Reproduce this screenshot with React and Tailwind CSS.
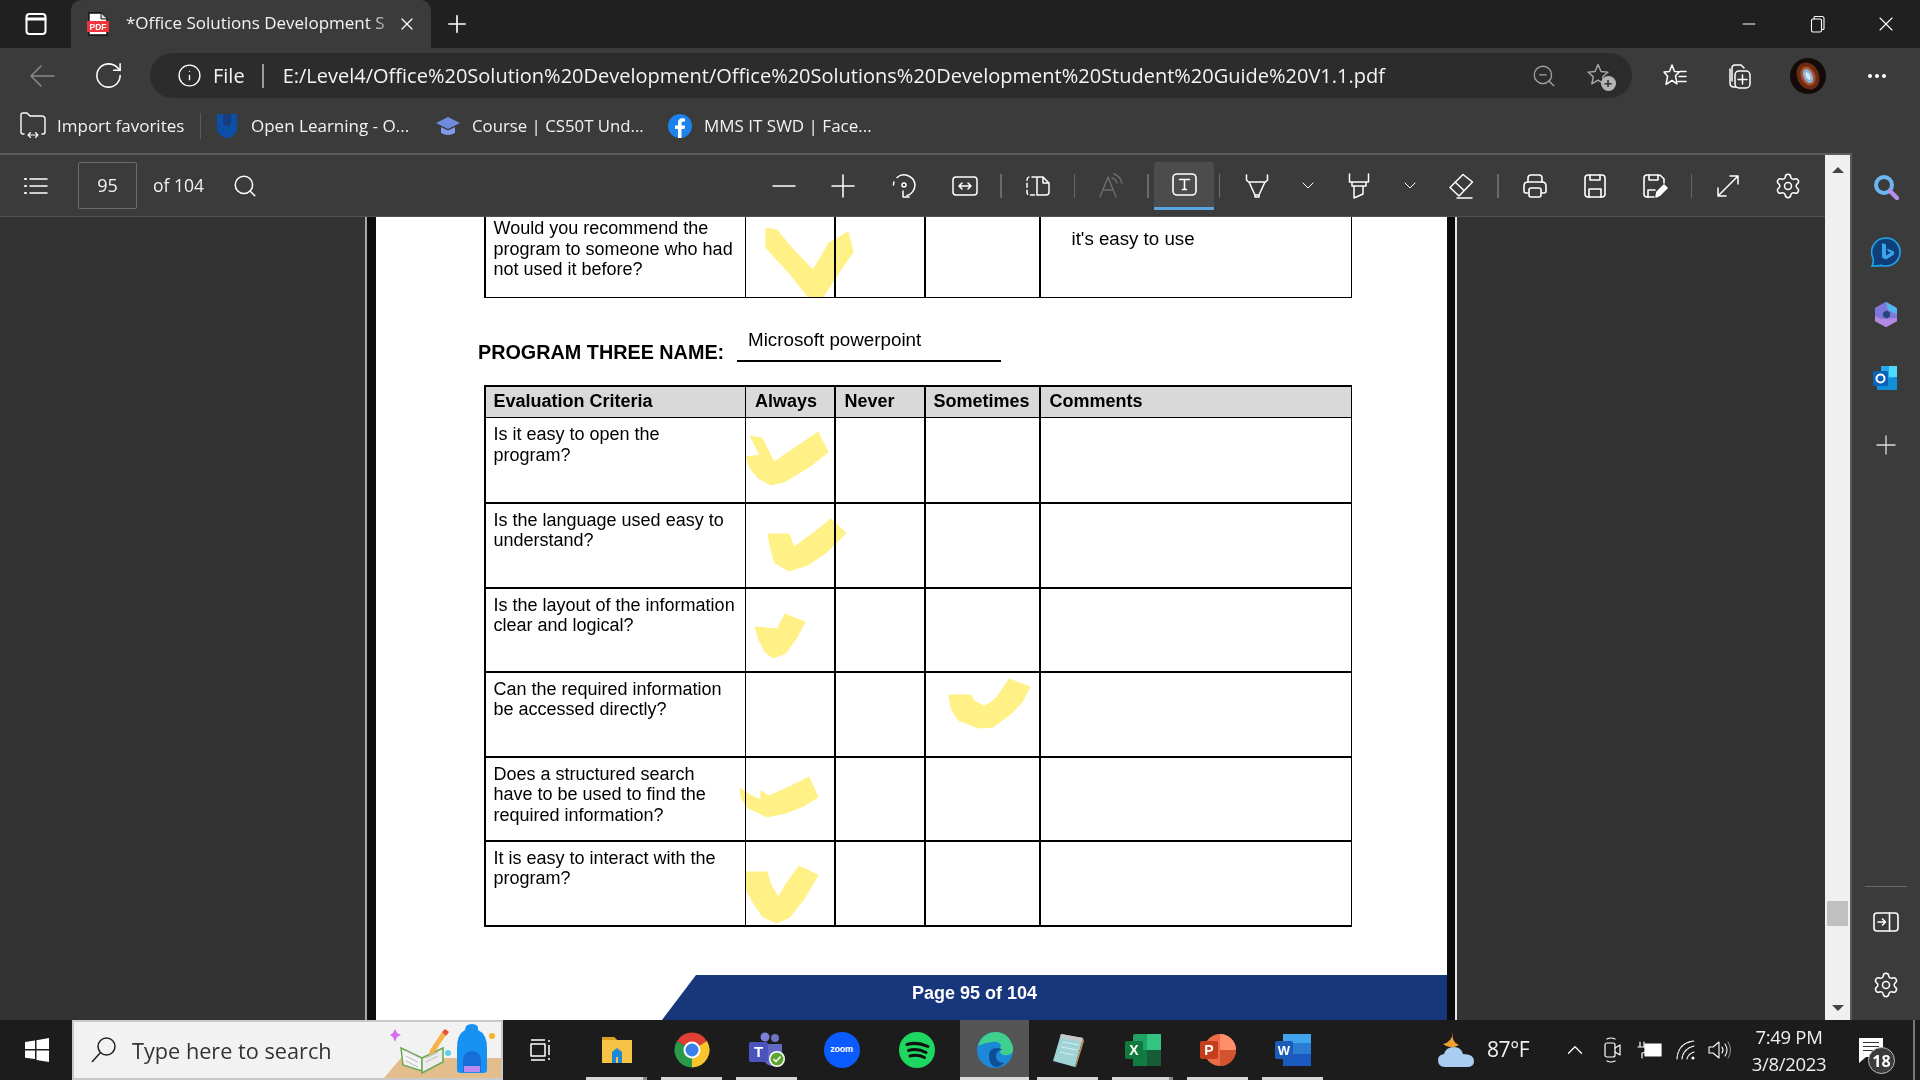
import React from "react";
import { Search, Info, ZoomOut, Settings, Plus, Minus, X, ChevronUp, RotateCw } from "lucide-react";

const S = ({ w = 28, h = 28, vb, children, className = "", sw = 1.6, stroke = "#fff" }) => (
  <svg width={w} height={h} viewBox={vb || `0 0 ${w} ${h}`} fill="none" stroke={stroke} strokeWidth={sw} strokeLinecap="round" strokeLinejoin="round" className={`shrink-0 ${className}`}>
    {children}
  </svg>
);

const Sep = () => <div className="w-[2px] h-[24px] bg-[#6a6a6a]" />;

const Slot = ({ className = "", children }) => (
  <div className={`flex items-center justify-center shrink-0 h-full ${className}`}>{children}</div>
);

const Pdf = () => (
  <svg width="24" height="24" viewBox="0 0 24 24" className="shrink-0">
    <path d="M3 1h12l6 6v16H3z" fill="#fff" stroke="#111" strokeWidth="1.4" />
    <path d="M15 1v6h6" fill="#ddd" stroke="#111" strokeWidth="1" />
    <rect x="1" y="9" width="22" height="11" fill="#f1353b" />
    <text x="12" y="18" textAnchor="middle" fontSize="8.5" fontWeight="700" fill="#fff" fontFamily="Liberation Sans, sans-serif">PDF</text>
  </svg>
);

const TabStrip = () => (
  <div className="h-[48px] bg-[#202020] flex items-end shrink-0">
    <Slot className="w-[71px]">
      <S w={24} h={24}><rect x="2.5" y="2" width="19" height="20" rx="3" strokeWidth="2" /><path d="M3 7h18" strokeWidth="3" /></S>
    </Slot>
    <div className="w-[360px] h-[48px] bg-[#3b3b3b] rounded-t-[10px] flex items-center pl-[15px] text-[#f2f2f2] text-[17px]">
      <Pdf />
      <span className="ml-[16px] mb-[2px] w-[262px] whitespace-nowrap [mask-image:linear-gradient(90deg,#000_93%,#0006_100%)]">*Office Solutions Development S</span>
      <X size={20} strokeWidth={1.5} className="ml-[9px] text-white" />
    </div>
    <Slot className="w-[52px] h-[48px]"><Plus size={28} strokeWidth={1.4} className="text-white" /></Slot>
    <div className="flex-1" />
    <Slot className="w-[69px] h-[48px]"><Minus size={20} strokeWidth={1.2} className="text-white" /></Slot>
    <Slot className="w-[69px] h-[48px]">
      <S w={18} h={18} sw={1.1}><rect x="2.5" y="4" width="10" height="13" rx="1.5" /><path d="M5 4V2.500q0-1 1-1h7q2 0 2 2v10q0 1-1 1h-1.500" /></S>
    </Slot>
    <Slot className="w-[68px] h-[48px]"><X size={24} strokeWidth={1.1} className="text-white" /></Slot>
  </div>
);

const AddressBar = () => (
  <div className="h-[52px] bg-[#3b3b3b] flex items-center shrink-0 pt-[3px]">
    <Slot className="w-[84px] pl-0">
      <S w={28} h={28} stroke="#8a8a8a" sw={1.5}><path d="M3 14h23M13 4 3 14l10 10" /></S>
    </Slot>
    <Slot className="w-[48px]">
      <RotateCw size={31} strokeWidth={1.2} className="text-white" />
    </Slot>
    <div className="w-[18px]" />
    <div className="w-[1482px] h-[45px] rounded-full bg-[#2c2c2c] flex items-center text-[#f4f4f4]">
      <Info size={25} strokeWidth={1.3} className="ml-[27px] text-white" />
      <span className="ml-[11px] text-[20px]">File</span>
      <div className="ml-[17px] w-[2px] h-[24px] bg-[#9a9a9a]" />
      <span className="ml-[19px] text-[20px] whitespace-nowrap w-[1120px]">E:/Level4/Office%20Solution%20Development/Office%20Solutions%20Development%20Student%20Guide%20V1.1.pdf</span>
      <ZoomOut size={26} strokeWidth={1.2} className="text-[#a4a4a4] ml-[128px]" />
      <div className="ml-[29px] relative w-[28px] h-[28px]">
        <S w={28} h={28} stroke="#aaa" sw={1.4}><path d="M12 2.500l3 7 7 .6-5.300 4.700 1.500 7-6.200-3.600-6.200 3.600 1.500-7L2 10.100l7-.6z" /></S>
        <div className="absolute right-[-2px] bottom-[-1px] w-[15px] h-[15px] rounded-full bg-[#b5b5b5] text-[#333] text-[15px] leading-[14px] text-center font-bold">+</div>
      </div>
    </div>
    <Slot className="w-[84px] pl-[1px]">
      <S w={28} h={28} sw={1.5}><path d="M11 3l2.500 6.500 5 .3-4 4 1.500 8-5-3.300-6 3.800 1.600-8L3 10l5.500-.5z" /><path d="M19 9.500h6M18 14.500h7M17 19.500h8" /></S>
    </Slot>
    <Slot className="w-[48px] ml-[-1px]">
      <S w={28} h={30} sw={1.5}><path d="M7 20V7q0-3 3-3h6l3 3" /><path d="M5 8v14q0 4 4 4h2" /><rect x="10" y="10" width="15" height="17" rx="4" /><path d="M17.500 14v9M13 18.500h9" /></S>
    </Slot>
    <Slot className="w-[90px]">
      <svg width="36" height="36" viewBox="0 0 36 36">
        <circle cx="18" cy="18" r="18" fill="#140b08" />
        <ellipse cx="18" cy="18" rx="11" ry="14" fill="#6b2c14" transform="rotate(-25 18 18)" />
        <ellipse cx="18" cy="18" rx="7" ry="10" fill="#a9532c" transform="rotate(-25 18 18)" />
        <ellipse cx="18" cy="18" rx="4.500" ry="7.500" fill="#8cb2e0" transform="rotate(-25 18 18)" />
        <ellipse cx="18" cy="18" rx="2" ry="4" fill="#dbe8f6" transform="rotate(-25 18 18)" />
      </svg>
    </Slot>
    <Slot className="w-[48px]">
      <div className="flex gap-[3px]"><i className="w-[4px] h-[4px] rounded-full bg-white" /><i className="w-[4px] h-[4px] rounded-full bg-white" /><i className="w-[4px] h-[4px] rounded-full bg-white" /></div>
    </Slot>
  </div>
);

const Bookmarks = () => (
  <div className="h-[53px] bg-[#3b3b3b] flex items-center shrink-0 text-[17px] text-[#f2f2f2] whitespace-nowrap pb-[2px]">
    <S w={26} h={28} className="ml-[20px]" sw={1.4}><path d="M4 22H3q-2 0-2-2V3q0-2 2-2h4l3 3h12q2 0 3 2v14q0 2-2 2h-1" /><path d="M8 23h10M8 23l2.500-2.500M8 23l2.500 2.500M18 23l-2.500-2.500M18 23l-2.500 2.500" strokeWidth="1.100" /></S>
    <span className="ml-[11px] w-[128px]">Import favorites</span>
    <div className="ml-[15px] w-px h-[26px] bg-[#5a5a5a]" />
    <svg width="22" height="26" viewBox="0 0 22 26" className="ml-[15px]">
      <path d="M1 1h20v15q0 6-10 9.500Q1 22 1 16z" fill="#0d4ea6" />
      <path d="M7 1h8v8q0 4-4 4t-4-4z" fill="#1a3d7a" />
    </svg>
    <span className="ml-[13px] w-[162px]">Open Learning - O...</span>
    <svg width="26" height="24" viewBox="0 0 26 24" className="ml-[22px]">
      <path d="M13 3 25 9l-12 6L1 9z" fill="#6e8be0" />
      <path d="M6 13v6q7 4 14 0v-6l-7 3.500z" fill="#7f9ae8" />
    </svg>
    <span className="ml-[11px] w-[172px] text-[16.800px]">Course | CS50T Und...</span>
    <svg width="24" height="24" viewBox="0 0 24 24" className="ml-[24px]">
      <circle cx="12" cy="12" r="12" fill="#1a83ee" />
      <path d="M13.500 24v-9h3l.6-3.500h-3.600V9.300q0-1.800 1.900-1.800H17V4.400q-1.200-.2-2.500-.2-4.500 0-4.500 4.600v2.700H7V15h3v9z" fill="#fff" />
    </svg>
    <span className="ml-[12px]">MMS IT SWD | Face...</span>
  </div>
);

const ToolBar = () => (
  <div className="h-[62px] bg-[#3b3b3b] border-b border-[#515151] flex items-center shrink-0 text-[#f2f2f2]">
    <Slot className="w-[72px]">
      <S w={26} h={22} sw={1.5}><path d="M7 4h17M7 11h17M7 18h17" /><path d="M2 4h1M2 11h1M2 18h1" strokeWidth="2" /></S>
    </Slot>
    <div className="ml-[6px] w-[59px] h-[47px] border border-[#6c6c6c] rounded-[2px] flex items-center justify-center text-[18px]">95</div>
    <span className="ml-[16px] w-[76px] text-[17.500px]">of 104</span>
    <Slot className="w-[32px]"><Search size={26} strokeWidth={1.4} className="text-white" /></Slot>
    <div className="w-[493px]" />
    <Slot className="w-[60px]"><S w={24} h={24} sw={1.5}><path d="M1 12h22" /></S></Slot>
    <Slot className="w-[58px]"><S w={24} h={24} sw={1.5}><path d="M1 12h22M12 1v22" /></S></Slot>
    <Slot className="w-[64px]"><S w={26} h={28} sw={1.5}><path d="M6 5.500A11 11 0 0 1 24 13a11 11 0 0 1-8 10.500" /><circle cx="13" cy="13" r="2" /><path d="M12 19v6h6" /><path d="M2.500 13q0-1.500.5-3" /></S></Slot>
    <Slot className="w-[58px]"><S w={28} h={22} sw={1.5}><rect x="2" y="2" width="24" height="18" rx="3" /><path d="M8 11h12M8 11l3-3M8 11l3 3M20 11l-3-3M20 11l-3 3" /></S></Slot>
    <Slot className="w-[14px]"><Sep /></Slot>
    <Slot className="w-[60px]"><S w={26} h={22} sw={1.5}><path d="M11 2H5q-3 0-3 3v12q0 3 3 3h6" strokeDasharray="4 3" /><path d="M12 2h6l6 6v9q0 3-3 3h-9zM18 2v6h6" /></S></Slot>
    <Slot className="w-[12px]"><div className="w-px h-[24px] bg-[#666]" /></Slot>
    <Slot className="w-[62px]">
      <S w={26} h={26} stroke="#6e6e6e" sw={1.4}><path d="M2 24 10 4l8 20M5 17h10" /><path d="M14 5q4 1 5 5M16 1q6 2 8 9" /></S>
    </Slot>
    <Slot className="w-[12px]"><Sep /></Slot>
    <div className="w-[60px] h-[48px] bg-[#4c4c4c] rounded-t-[3px] border-b-[3px] border-[#55a5e0] flex items-center justify-center">
      <S w={25} h={23} sw={1.6}><rect x="1" y="1" width="23" height="21" rx="4" /><path d="M7.500 6.500h10M12.500 6.500v10M10.500 16.500h4" /></S>
    </div>
    <Slot className="w-[11px]"><div className="w-px h-[24px] bg-[#707070]" /></Slot>
    <Slot className="w-[64px]"><S w={24} h={26} sw={1.5}><path d="M1.500 2v5l2 2h17l2-2V2M4 9l6 13h4l6-13M10 22v2h4v-2" /></S></Slot>
    <Slot className="w-[38px]"><S w={14} h={10} sw={1}><path d="M2 2l5 5 5-5" /></S></Slot>
    <Slot className="w-[64px]"><S w={24} h={26} sw={1.5}><path d="M2.500 1v8h19V1M5 9v4h14V9M7 13v12l9-4v-8" /></S></Slot>
    <Slot className="w-[38px]"><S w={14} h={10} sw={1}><path d="M2 2l5 5 5-5" /></S></Slot>
    <Slot className="w-[64px]"><S w={26} h={26} sw={1.5}><path d="M15 1.500 24.500 9 11 23l-9-8.500zM7 9l9 8.500M9 25h15" /></S></Slot>
    <Slot className="w-[10px]"><Sep /></Slot>
    <Slot className="w-[64px]"><S w={26} h={26} sw={1.6}><path d="M6 9V5q0-3 3-3h8q3 0 3 3v4" /><path d="M6 20H4q-2 0-2-2v-5q0-4 4-4h14q4 0 4 4v5q0 2-2 2h-2" /><rect x="7" y="15" width="12" height="9" rx="2" /></S></Slot>
    <Slot className="w-[56px]"><S w={24} h={26} sw={1.6}><rect x="2" y="2" width="20" height="22" rx="3" /><path d="M7 2v5h10V2M6 24v-8h12v8" /></S></Slot>
    <Slot className="w-[64px]"><S w={26} h={26} sw={1.6}><path d="M12 24H5q-3 0-3-3V5q0-3 3-3h11q3 0 4 2l2 2v4" /><path d="M7 2v5h9V2M6 24v-7h7" /><path d="M14 24l1-5 7-7 3 3-7 7z" fill="#fff" /></S></Slot>
    <Slot className="w-[8px]"><div className="w-px h-[24px] bg-[#666]" /></Slot>
    <Slot className="w-[66px]"><S w={26} h={26} sw={1.5}><path d="M3 23 23 3M15 3h8v8M3 15v8h8" /></S></Slot>
    <Slot className="w-[54px]"><Settings size={28} strokeWidth={1.3} className="text-white" /></Slot>
    <div className="w-[9px]" />
  </div>
);

const CHECKS = [
  "766,228 777,230 790,246 813,270 829,243 848,232 853,252 838,274 823,297 808,297 790,274 766,248",
  "750,436 762,438 768,450 774,462 796,447 818,432 828,452 812,465 796,475 784,482 771,485 758,478 750,468 746,457 760,455",
  "768,534 789,534 794,547 812,534 831,519 846,533 827,552 808,565 789,571 775,563 771,550",
  "755,627 777,629 785,614 805,622 796,639 786,653 773,658 765,652 759,640",
  "949,695 971,695 974,701 984,706 990,703 997,697 1009,679 1030,687 1022,702 1012,713 993,727 978,728 958,720 951,708",
  "740,788 750,795 761,800 761,791 769,796 789,787 809,777 818,797 804,806 786,813 767,817 748,808 741,798",
  "746,872 767,872 771,885 778,897 788,881 799,866 818,875 804,899 790,917 777,923 763,917 754,904 746,890",
];

const ROWS = [
  ["Is it easy to open the", "program?"],
  ["Is the language used easy to", "understand?"],
  ["Is the layout of the information", "clear and logical?"],
  ["Can the required information", "be accessed directly?"],
  ["Does a structured search", "have to be used to find the", "required information?"],
  ["It is easy to interact with the", "program?"],
];

const Cell = ({ className = "bg-white", children }) => <div className={className}>{children}</div>;

const Lines = ({ lines }) => (
  <div className="pl-[8px] pt-[6px]">
    {lines.map((l) => <div key={l} className="whitespace-nowrap">{l}</div>)}
  </div>
);

const HEAD = "bg-[#d9d9d9] font-bold flex items-center";

const Page = () => (
  <div className="w-[1071px] h-full bg-white flex flex-col text-black font-['Liberation_Sans',Arial,sans-serif] text-[18px] leading-[20.6px] overflow-hidden">
    <div className="ml-[108px] w-[868px] -mt-[5px] grid grid-cols-[259px_88px_88.5px_113.5px_310px] grid-rows-[84.5px] bg-black gap-x-[1.5px] px-[1.5px] pb-[1.5px] shrink-0">
      <Cell><Lines lines={["Would you recommend the", "program to someone who had", "not used it before?"]} /></Cell>
      <Cell /><Cell /><Cell />
      <Cell className="bg-white pl-[31px] pt-[17px] text-[18.700px]">it's easy to use</Cell>
    </div>
    <div className="h-[87px] shrink-0 flex items-start ml-[102px]">
      <div className="mt-[42px] w-[259px] font-bold text-[19.800px] leading-[24px] whitespace-nowrap">PROGRAM THREE NAME:</div>
      <div className="mt-[30px] w-[264px] h-[34px] border-b-2 border-black pl-[11px] text-[18.800px] leading-[24px]">Microsoft powerpoint</div>
    </div>
    <div className="ml-[108px] w-[868px] grid grid-cols-[259px_88px_88.5px_113.5px_310px] grid-rows-[30px_84px_83.500px_82.500px_83.500px_82.500px_83.500px] bg-black gap-x-[1.5px] gap-y-[1.5px] px-[1.5px] py-[1.5px] shrink-0">
      <Cell className={`${HEAD} pl-[8px]`}>Evaluation Criteria</Cell>
      <Cell className={`${HEAD} pl-[9px]`}>Always</Cell>
      <Cell className={`${HEAD} pl-[9px]`}>Never</Cell>
      <Cell className={`${HEAD} pl-[8px]`}>Sometimes</Cell>
      <Cell className={`${HEAD} pl-[9px]`}>Comments</Cell>
      {ROWS.map((lines) => (
        <React.Fragment key={lines[0]}>
          <Cell><Lines lines={lines} /></Cell>
          <Cell /><Cell /><Cell /><Cell />
        </React.Fragment>
      ))}
    </div>
    <div className="mt-auto ml-[286px] h-[45px] bg-[#17367b] [clip-path:polygon(34px_0,100%_0,100%_100%,0_100%)] flex items-start pt-[8px] pl-[250px] text-white font-bold text-[18px] shrink-0">Page 95 of 104</div>
  </div>
);

const DocArea = () => (
  <div className="relative flex-1 min-h-0 bg-[#333333] flex overflow-hidden">
    <div className="w-[365px] shrink-0" />
    <div className="w-[2px] bg-[#a8a8a8] shrink-0" />
    <div className="w-[9px] bg-[#0c0c0c] shrink-0" />
    <Page />
    <div className="w-[8px] bg-[#0c0c0c] shrink-0" />
    <div className="w-[2px] bg-[#e6e6e6] shrink-0" />
    <svg viewBox="0 217 1825 803" className="absolute inset-0 w-full h-full mix-blend-multiply pointer-events-none">
      {CHECKS.map((p) => <polygon key={p} points={p} fill="#fff185" stroke="#fff185" strokeWidth="1" strokeLinejoin="round" />)}
    </svg>
  </div>
);

const Scrollbar = () => (
  <div className="w-[25px] shrink-0 bg-[#f0f0f0] flex flex-col items-center">
    <div className="h-[18px] flex items-end"><div className="w-0 h-0 border-x-[6px] border-x-transparent border-b-[6px] border-b-[#444]" /></div>
    <div className="flex-1" />
    <div className="w-[21px] h-[25px] bg-[#c0c0c0]" />
    <div className="h-[94px] flex items-end pb-[9px]"><div className="w-0 h-0 border-x-[6px] border-x-transparent border-t-[6px] border-t-[#444]" /></div>
  </div>
);

const Sidebar = () => (
  <div className="w-[68px] shrink-0 bg-[#3b3b3b] flex flex-col items-center pt-[4px]">
    <div className="h-[63px] flex items-center">
      <svg width="26" height="26" viewBox="0 0 26 26" className="-mt-[3px] -ml-[1px]"><circle cx="11" cy="11" r="8" fill="none" stroke="#6db5f0" strokeWidth="4" /><path d="M17 17l7 7" stroke="#b58fe8" strokeWidth="4.500" strokeLinecap="round" /></svg>
    </div>
    <div className="h-[63px] flex items-center">
      <svg width="30" height="30" viewBox="0 0 30 30">
        <path d="M15 1a14 14 0 1 1-4 27.400Q5 29 1 29q2-4 1-8A14 14 0 0 1 15 1z" fill="#0f3e78" stroke="#1da7f0" strokeWidth="1.600" />
        <path d="M11 6l4 1.500v11l5-3-3-1-1-3 7 3v3l-8 5-4-2z" fill="#37a6ef" />
      </svg>
    </div>
    <div className="h-[63px] flex items-center">
      <svg width="26" height="27" viewBox="0 0 26 27">
        <path d="M13 2l10 5.500v12L13 25 3 19.500v-12z" fill="#7d79d8" stroke="#7d79d8" strokeWidth="2" strokeLinejoin="round" />
        <path d="M13 1l11 6.500v6L15 9z" fill="#52b8ec" />
        <path d="M2 15l7 3 15-1v3L13 26 2 20z" fill="#b28ae0" />
        <path d="M10 11.500l4-2 3 2v4l-3 2-4-2z" fill="#26447f" />
      </svg>
    </div>
    <div className="h-[63px] flex items-center">
      <svg width="26" height="26" viewBox="0 0 26 26">
        <path d="M8 1h16v24H4v-6h4z" fill="#28a8ea" />
        <path d="M16 1h8v11h-8z" fill="#50d9ff" />
        <path d="M4 14l20-2v13H4z" fill="#0f8fd8" />
        <rect x="0" y="6" width="15" height="15" rx="1.500" fill="#0a63b8" />
        <circle cx="7.500" cy="13.500" r="4" fill="none" stroke="#fff" strokeWidth="2" />
      </svg>
    </div>
    <div className="h-[63px] mt-[4px] flex items-center">
      <S w={20} h={20} sw={1.3} stroke="#ddd"><path d="M1 10h18M10 1v18" /></S>
    </div>
    <div className="flex-1" />
    <div className="w-[42px] h-px bg-[#6a6a6a]" />
    <div className="h-[70px] flex items-center">
      <S w={26} h={20} sw={1.6}><rect x="1" y="1" width="24" height="18" rx="3" /><path d="M16.500 1v18M5 10h7.500M9.500 7l3 3-3 3" /></S>
    </div>
    <div className="h-[56px] mb-[7px] flex items-center"><Settings size={28} strokeWidth={1.3} className="text-white" /></div>
  </div>
);

const TaskSlot = ({ children, active, dbl, bg, w = "w-[75px]" }) => (
  <div className={`relative ${w} h-full flex items-center justify-center shrink-0 ${bg ? "bg-[#555555]" : ""}`}>
    {children}
    {active && <div className="absolute bottom-0 left-[7px] right-[7px] h-[3px] bg-[#d6d6d6]" />}
    {dbl && <div className="absolute bottom-0 right-[7px] w-[4px] h-[3px] bg-[#8a8a8a]" />}
  </div>
);

const SearchBox = () => (
  <div className="w-[431px] h-full bg-[#f2f2f2] border-2 border-[#c9c9c9] flex items-center overflow-hidden shrink-0">
    <svg width="26" height="28" viewBox="0 0 26 28" className="ml-[17px] shrink-0" fill="none" stroke="#222" strokeWidth="1.500"><circle cx="15.500" cy="10.500" r="8.500" /><path d="M9.500 16.500 1 26" /></svg>
    <span className="ml-[15px] mt-[2px] text-[21.700px] text-[#333] whitespace-nowrap font-['Open_Sans',sans-serif]">Type here to search</span>
    <svg width="118" height="56" viewBox="385 1022 118 56" className="ml-auto shrink-0">
      <path d="M386 1078 403 1058H503v20z" fill="#e3bd8c" />
      <path d="M403 1048l21 10v13l-19-6z" fill="#f4f4f4" stroke="#6aa84f" strokeWidth="1.500" />
      <path d="M424 1058l21-10 0 14-21 11z" fill="#ececec" stroke="#6aa84f" strokeWidth="1.500" />
      <path d="M408 1051l12 6M408 1056l12 6M408 1061l12 6M428 1058l12-6M428 1062l12-6" stroke="#bbb" />
      <path d="M432 1050l12-18 4 3-12 18-5 2z" fill="#f5b24a" />
      <path d="M444 1032l3-3 4 3-3 4z" fill="#e8503a" />
      <path d="M459 1048q0-14 8-18 0-6 7-6t6 6q9 4 9 18v22q0 3-4 3h-22q-4 0-4-3z" fill="#1791f2" />
      <path d="M465 1072v-11q0-10 9-10t9 10v11z" fill="#1670d8" />
      <path d="M466 1072v-6h16v6z" fill="#b98af0" />
      <path d="M397 1029l2 4 4 2-4 2-2 5-2-5-3-2 3-2z" fill="#d56df0" />
      <circle cx="494" cy="1036" r="3" fill="#f5b324" />
      <circle cx="450" cy="1053" r="3" fill="#5fd0ea" />
    </svg>
  </div>
);

const Chrome = () => (
  <svg width="36" height="36" viewBox="0 0 36 36">
    <path d="M18 18 3 9A17.500 17.500 0 0 1 33 9z" fill="#e23f34" />
    <path d="M18 18 33 9A17.500 17.500 0 0 1 18 35.500z" fill="#f8c52a" />
    <path d="M18 18 18 35.500A17.500 17.500 0 0 1 3 9z" fill="#2a9a4a" />
    <circle cx="18" cy="18" r="8.500" fill="#fff" />
    <circle cx="18" cy="18" r="6.500" fill="#3d7fe8" />
  </svg>
);

const Taskbar = () => (
  <div className="h-[60px] bg-[#1c1c1c] flex items-stretch shrink-0 text-white">
    <div className="w-[72px] flex items-center justify-center shrink-0 pl-[1px]">
      <svg width="24" height="24" viewBox="0 0 24 24" fill="#fff"><path d="M0 4l10-1.500V11H0zM11.500 2.300 24 0v11H11.500zM0 12.500h10V21L0 19.700zM11.500 12.500H24V24l-12.500-2z" /></svg>
    </div>
    <SearchBox />
    <TaskSlot w="w-[76px]">
      <S w={24} h={24} sw={1.5}><path d="M2 2h14M2 22h14M2 6h14v12H2zM20 2v2M20 7v10M20 20v2" strokeLinecap="butt" /></S>
    </TaskSlot>
    <TaskSlot active dbl>
      <svg width="32" height="30" viewBox="0 0 32 30"><path d="M1 2h12l3 3h15v23H1z" fill="#f6c344" /><path d="M1 2h12l3 3H1z" fill="#d99e22" /><path d="M11 28V17l5-4 5 4v11h-4v-6h-2v6z" fill="#1e88d8" /></svg>
    </TaskSlot>
    <TaskSlot active><Chrome /></TaskSlot>
    <TaskSlot active>
      <svg width="38" height="36" viewBox="0 0 38 36">
        <circle cx="27" cy="6" r="4" fill="#6c74c4" /><circle cx="17" cy="5" r="4.500" fill="#7b83d8" />
        <path d="M14 12h20v14q0 8-8 8t-10-6z" fill="#6269c0" />
        <rect x="1" y="10" width="19" height="20" rx="2" fill="#4b53bc" />
        <text x="10.500" y="25" textAnchor="middle" fontSize="15" fontWeight="700" fill="#fff" fontFamily="Liberation Sans, sans-serif">T</text>
        <circle cx="29" cy="27" r="8" fill="#fff" /><circle cx="29" cy="27" r="6.500" fill="#5ca52e" />
        <path d="M25.500 27l2.500 2.500 4.500-5" stroke="#fff" strokeWidth="1.500" fill="none" />
      </svg>
    </TaskSlot>
    <TaskSlot>
      <div className="w-[36px] h-[36px] rounded-full bg-[#0b5cff] flex items-center justify-center text-[9px] font-bold tracking-[-0.2px] text-white font-['Liberation_Sans',sans-serif]">zoom</div>
    </TaskSlot>
    <TaskSlot>
      <svg width="36" height="36" viewBox="0 0 36 36"><circle cx="18" cy="18" r="18" fill="#1ed760" /><path d="M8 12.500q10-3 21 2M9.500 18.500q9-2.500 17.500 2M11 24q7.500-2 14.500 1.500" stroke="#111" strokeWidth="3" strokeLinecap="round" fill="none" /></svg>
    </TaskSlot>
    <div className="w-[6px] shrink-0" />
    <TaskSlot bg w="w-[69px]">
      <svg width="36" height="36" viewBox="0 0 36 36">
        <circle cx="18" cy="18" r="18" fill="#1b88d8" />
        <path d="M1 14Q5 1 18 0q14 0 18 15 1 7-5 8-8 1-8-4 0-4 1-6-3-4-9-3-8 1-14 4z" fill="#3fd08d" />
        <path d="M12 24q0-8 8-8 4 0 5 2-6 0-6 6 0 7 8 7-4 4-9 4-6-3-6-11z" fill="#0f4d96" />
      </svg>
      <div className="absolute bottom-0 left-0 right-0 h-[3px] bg-[#dcdcdc]" />
    </TaskSlot>
    <div className="w-[1px] shrink-0" />
    <TaskSlot active w="w-[75px]">
      <svg width="34" height="36" viewBox="0 0 34 36"><path d="M10 2l22 4-8 29L2 29z" fill="#9fd3d8" /><path d="M10 2l22 4-1 4-22-4z" fill="#c8c8c8" /><path d="M24 35l8-29 1 3-8 26z" fill="#c89a4a" /><path d="M12 10l16 3M10 15l16 3M9 20l14 3" stroke="#d9eef0" /></svg>
    </TaskSlot>
    <TaskSlot active dbl>
      <svg width="36" height="36" viewBox="0 0 36 36">
        <rect x="8" y="2" width="28" height="32" rx="2" fill="#21a366" /><rect x="22" y="2" width="14" height="16" fill="#33c481" /><rect x="8" y="18" width="14" height="16" fill="#107c41" /><rect x="22" y="18" width="14" height="16" fill="#185c37" />
        <rect x="0" y="9" width="18" height="18" rx="2" fill="#0f7a3c" />
        <text x="9" y="23" textAnchor="middle" fontSize="14" fontWeight="700" fill="#fff" fontFamily="Liberation Sans, sans-serif">X</text>
      </svg>
    </TaskSlot>
    <TaskSlot active>
      <svg width="36" height="36" viewBox="0 0 36 36">
        <circle cx="20" cy="18" r="16" fill="#ed6c47" /><path d="M20 2a16 16 0 0 1 16 16H20z" fill="#ff8f6b" /><path d="M20 18h16a16 16 0 0 1-16 16z" fill="#d35230" />
        <rect x="0" y="9" width="18" height="18" rx="2" fill="#c43e1c" />
        <text x="9" y="23" textAnchor="middle" fontSize="14" fontWeight="700" fill="#fff" fontFamily="Liberation Sans, sans-serif">P</text>
      </svg>
    </TaskSlot>
    <TaskSlot active>
      <svg width="36" height="36" viewBox="0 0 36 36">
        <rect x="8" y="2" width="28" height="32" rx="2" fill="#2b7cd3" /><rect x="8" y="2" width="28" height="9" fill="#41a5ee" /><rect x="8" y="22" width="28" height="12" fill="#185abd" />
        <rect x="0" y="9" width="18" height="18" rx="2" fill="#1a5cb8" />
        <text x="9" y="23" textAnchor="middle" fontSize="13" fontWeight="700" fill="#fff" fontFamily="Liberation Sans, sans-serif">W</text>
      </svg>
    </TaskSlot>
    <div className="w-[108px] shrink-0" />
    <div className="w-[36px] flex items-center justify-center shrink-0">
      <svg width="36" height="38" viewBox="0 0 36 38"><path d="M15 1q-2 10 6 13-9 5-16-1 9-2 10-12z" fill="#f0a030" /><path d="M7 36q-7 0-7-7 0-5 6-6 2-7 10-7 7 0 9 7 11 0 11 7 0 6-7 6z" fill="#a8cdf0" /></svg>
    </div>
    <div className="ml-[13px] w-[44px] flex items-center text-[21px] text-[#f0f0f0] font-['Open_Sans',sans-serif] whitespace-nowrap tracking-[-0.4px]">87°F</div>
    <Slot className="w-[48px] ml-[20px] !h-auto self-center"><ChevronUp size={26} strokeWidth={1.2} className="text-white" /></Slot>
    <Slot className="w-[28px] !h-auto self-center">
      <S w={18} h={28} sw={1.2}><rect x="1" y="7" width="10" height="14" rx="2" /><path d="M11 12l5-3v10l-5-3M3 3q4-2 8 0M3 25q4 2 8 0" /></S>
    </Slot>
    <Slot className="w-[46px] !h-auto self-center">
      <S w={26} h={18} sw={1.2}><path d="M3 1v5M7 1v5M1 6h8v3q0 3-4 3v5" /><rect x="8" y="3" width="16" height="12" fill="#fff" /></S>
    </Slot>
    <Slot className="w-[26px] !h-auto self-center">
      <S w={20} h={20} sw={1.1}><path d="M1 19Q2 3 18 1M6 19q1-10 12-13M11 19q1-5 7-7" strokeDasharray="3 1" /><circle cx="17" cy="18" r="1" fill="#fff" /></S>
    </Slot>
    <Slot className="w-[42px] !h-auto self-center">
      <S w={24} h={20} sw={1.1}><path d="M1 7h4l6-5v16l-6-5H1zM14 7q2 3 0 6M17 4q4 6 0 12" /><path d="M20 2q5 8 0 16" stroke="#888" /></S>
    </Slot>
    <div className="w-[90px] ml-[3px] flex flex-col items-center justify-center text-[18.500px] leading-[27px] text-[#efefef] font-['Open_Sans',sans-serif] whitespace-nowrap tracking-[-0.3px]">
      <div>7:49 PM</div>
      <div>3/8/2023</div>
    </div>
    <div className="relative w-[62px] ml-[8px] flex items-center justify-center shrink-0">
      <div className="relative w-[24px] h-[19px] bg-white -mt-[6px] ml-[-5px] pt-[4px] px-[4px] flex flex-col gap-[3px]">
        <i className="h-px bg-[#333]" /><i className="h-px bg-[#333]" /><i className="h-px bg-[#333]" />
        <div className="absolute left-0 top-full w-0 h-0 border-l-[7px] border-l-white border-b-[6px] border-b-transparent" />
      </div>
      <div className="absolute left-[26px] top-[27px] w-[27px] h-[27px] rounded-full bg-[#3b3b3b] border border-[#bbb] flex items-center justify-center text-[16px] font-bold text-white font-['Open_Sans',sans-serif]">18</div>
    </div>
    <div className="w-[2px] bg-[#777] ml-auto shrink-0" />
    <div className="w-[5px] shrink-0" />
  </div>
);

export default function App() {
  return (
    <div className="w-[1920px] h-[1080px] flex flex-col overflow-hidden bg-[#3b3b3b] font-['Open_Sans',sans-serif]">
      <TabStrip />
      <AddressBar />
      <Bookmarks />
      <div className="flex flex-1 min-h-0">
        <div className="w-[1852px] flex flex-col border-r-2 border-[#5a5a5a] shrink-0">
          <div className="h-[2px] bg-[#5d5d5d] shrink-0" />
          <div className="flex flex-1 min-h-0">
            <div className="w-[1825px] flex flex-col shrink-0">
              <ToolBar />
              <DocArea />
            </div>
            <Scrollbar />
          </div>
        </div>
        <Sidebar />
      </div>
      <Taskbar />
    </div>
  );
}
